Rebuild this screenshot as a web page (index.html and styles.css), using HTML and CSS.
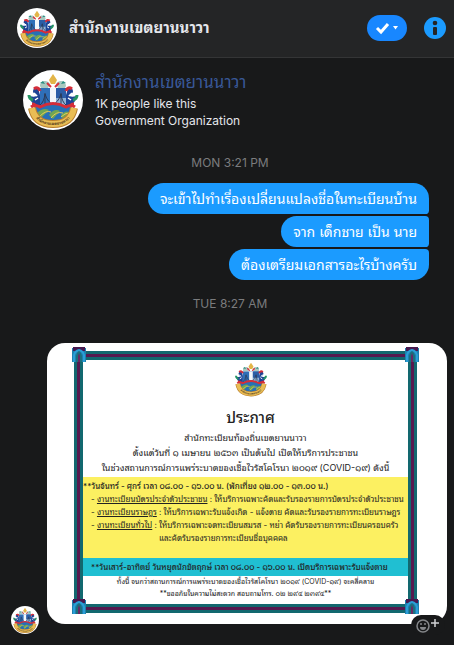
FILE: index.html
```
<!DOCTYPE html>
<html lang="th">
<head>
    <meta charset="UTF-8">
    <meta name="viewport" content="width=device-width, initial-scale=1.0">
    <title>สำนักงานเขตยานนาวา</title>
    <link rel="stylesheet" href="styles.css">
</head>
<body>
    <!-- shared drawings -->
    <svg class="defs" width="0" height="0" aria-hidden="true">
        <symbol id="emblem" viewBox="0 0 60 60">
            <path d="M30 4l4 6-2 4h-4l-2-4z" fill="#e3b548"/>
            <path d="M17 16c0-5 7-7 10-2l-2 4h-7zM43 16c0-5-7-7-10-2l2 4h7z" fill="#a9c8c0"/>
            <path d="M17 13l3-2 2 3zM43 13l-3-2-2 3z" fill="#2c8f83"/>
            <path d="M24 13l4 4M36 13l-4 4" stroke="#d8303c" stroke-width="2"/>
            <path d="M17 18h26v18q-13 9-26 0z" fill="#2f6fb8"/>
            <path d="M27 18h6v22h-6z" fill="#f2f6fa"/>
            <path d="M33 18h10v10H33z" fill="#2b5da6"/>
            <path d="M33 28h10v9H33z" fill="#8fb4d8"/>
            <path d="M22 23v15M38 23v15M22 24q-1 8-5 11M22 24q3 9 8 10 5-1 8-10 1 8 5 11" fill="none" stroke="#2c3b57" stroke-width="1"/>
            <path d="M15 18q-5-1-5 4 2 4 5 3-3 3-8 1 0 6 4 8 3 2 2 5l4-3V25z" fill="#1d4496"/>
            <path d="M45 18q5-1 5 4-2 4-5 3 3 3 8 1 0 6-4 8-3 2-2 5l-4-3V25z" fill="#1d4496"/>
            <path d="M11 19q4-3 6 2M49 19q-4-3-6 2" fill="none" stroke="#d42e3a" stroke-width="3"/>
            <path d="M6 25q0 4 4 5M54 25q0 4-4 5" fill="none" stroke="#249463" stroke-width="3"/>
            <path d="M11 23l3 3M49 23l-3 3M12 30l3-2M48 30l-3-2" stroke="#fff" stroke-width="1.500"/>
            <path d="M9 34q4 0 4 4M51 34q-4 0-4 4" fill="none" stroke="#d42e3a" stroke-width="3"/>
            <path d="M11 38q19-8 38 0l-4 11q-15 6-30 0z" fill="#2670b6"/>
            <path d="M14 43q6-6 12-3l-8 8zM26 45q5-7 11-4l-7 8zM38 45q5-6 9-2l-7 6z" fill="#6fa653"/>
            <path d="M17 46q6-6 11-4M28 48q5-7 12-5M38 47q4-4 8-4" fill="none" stroke="#e7cb58" stroke-width="1"/>
            <path d="M8 37q4-3 9 0 13-7 26 0 5-3 9 0" fill="none" stroke="#d52d38" stroke-width="3"/>
            <path d="M9 38Q12 54 30 54T51 38" fill="none" stroke="#b97f2e" stroke-width="8"/>
            <path d="M9 38Q12 54 30 54T51 38" fill="none" stroke="#e9bd55" stroke-width="6"/>
            <path id="ribbon" d="M9 40Q13 55 30 55T51 40" fill="none"/>
            <text class="ribbon-text"><textPath href="#ribbon" startOffset="50%">สำนักงานเขตยานนาวา</textPath></text>
        </symbol>
        <symbol id="corner" viewBox="0 0 14 15">
            <path d="M0 1h14v14H0z" fill="#1f7fae"/>
            <path d="M1 0h12v4H1z" fill="#47184e"/>
            <path d="M2 15V8q1-4 5-5 4 1 5 5v7" fill="none" stroke="#2a9fd6" stroke-width="2"/>
            <path d="M4 15V9q1-4 3-5 2 1 3 5v6z" fill="#1b6f7c"/>
            <path d="M6 15V9l1-3 1 3v6z" fill="#6a2763"/>
        </symbol>
    </svg>

    <header class="topbar">
        <svg class="avatar avatar-header" role="img" aria-label="สำนักงานเขตยานนาวา"><use href="#emblem"/></svg>
        <h1 class="topbar-title">สำนักงานเขตยานนาวา</h1>
        <button class="done-btn" type="button" aria-label="Mark as done">
            <svg width="24" height="14" viewBox="0 0 24 14">
                <path d="M2 7l4 4 7-8" fill="none" stroke="#fff" stroke-width="3"/>
                <path d="M18 5h5l-2.500 3.500z" fill="#fff"/>
            </svg>
        </button>
        <button class="info-btn" type="button" aria-label="Conversation information">
            <svg width="22" height="22" viewBox="0 0 22 22">
                <circle cx="11" cy="11" r="11" fill="#1b9bff"/>
                <circle cx="11" cy="6" r="2.300" fill="#242526"/>
                <rect x="9" y="10" width="4" height="8" rx="1" fill="#242526"/>
            </svg>
        </button>
    </header>

    <main class="chat">
        <section class="profile">
            <svg class="avatar avatar-profile" aria-hidden="true"><use href="#emblem"/></svg>
            <div class="profile-info">
                <a class="profile-name" href="#">สำนักงานเขตยานนาวา</a>
                <p>1K people like this</p>
                <p>Government Organization</p>
            </div>
        </section>

        <time class="stamp">MON 3:21 PM</time>

        <div class="bubbles">
            <p class="bubble">จะเข้าไปทำเรื่องเปลี่ยนแปลงชื่อในทะเบียนบ้าน</p>
            <p class="bubble">จาก เด็กชาย เป็น นาย</p>
            <p class="bubble">ต้องเตรียมเอกสารอะไรบ้างครับ</p>
        </div>

        <time class="stamp">TUE 8:27 AM</time>

        <div class="reply">
            <svg class="avatar avatar-small" aria-hidden="true"><use href="#emblem"/></svg>
            <article class="notice">
                <div class="notice-frame">
                    <svg class="corner corner-tl"><use href="#corner"/></svg>
                    <svg class="corner corner-tr"><use href="#corner"/></svg>
                    <svg class="corner corner-bl"><use href="#corner"/></svg>
                    <svg class="corner corner-br"><use href="#corner"/></svg>
                    <div class="notice-head">
                        <svg class="notice-emblem" viewBox="3 3 54 56"><use href="#emblem" width="60" height="60"/></svg>
                        <h2>ประกาศ</h2>
                        <p>สำนักทะเบียนท้องถิ่นเขตยานนาวา</p>
                        <p>ตั้งแต่วันที่ ๑ เมษายน ๒๕๖๓ เป็นต้นไป เปิดให้บริการประชาชน</p>
                        <p>ในช่วงสถานการณ์การแพร่ระบาดของเชื้อไวรัสโคโรนา ๒๐๑๙ (COVID-๑๙) ดังนี้</p>
                    </div>
                    <div class="weekday">
                        <p>**วันจันทร์ - ศุกร์ เวลา ๐๘.๐๐ - ๑๖.๐๐ น. (พักเที่ยง ๑๒.๐๐ - ๑๓.๐๐ น.)</p>
                        <ul>
                            <li>- <u>งานทะเบียนบัตรประจำตัวประชาชน</u> : ให้บริการเฉพาะคัดและรับรองรายการบัตรประจำตัวประชาชน</li>
                            <li>- <u>งานทะเบียนราษฎร</u> : ให้บริการเฉพาะรับแจ้งเกิด - แจ้งตาย คัดและรับรองรายการทะเบียนราษฎร</li>
                            <li>- <u>งานทะเบียนทั่วไป</u> : ให้บริการเฉพาะจดทะเบียนสมรส - หย่า คัดรับรองรายการทะเบียนครอบครัว</li>
                            <li class="continued">และคัดรับรองรายการทะเบียนชื่อบุคคคล</li>
                        </ul>
                    </div>
                    <p class="weekend">**วันเสาร์-อาทิตย์ วันหยุดนักขัตฤกษ์ เวลา ๐๘.๐๐ - ๑๖.๐๐ น. เปิดบริการเฉพาะรับแจ้งตาย</p>
                    <div class="notice-foot">
                        <p>ทั้งนี้ จนกว่าสถานการณ์การแพร่ระบาดของเชื้อไวรัสโคโรนา ๒๐๑๙ (COVID-๑๙) จะคลี่คลาย</p>
                        <p>**ขออภัยในความไม่สะดวก สอบถามโทร. ๐๒ ๒๙๔ ๒๓๙๔**</p>
                    </div>
                </div>
                <button class="react-btn" type="button" aria-label="Add reaction">
                    <svg width="26" height="16" viewBox="0 0 26 16" fill="none">
                        <circle cx="8" cy="9" r="6" stroke="#85878a" stroke-width="1.500"/>
                        <path d="M5 10h6q0 3-3 3t-3-3z" fill="#85878a"/>
                        <path d="M6 6v2M10 6v2" stroke="#85878a" stroke-width="1.500"/>
                        <path d="M20 2v8M16 6h8" stroke="#d0d2d5" stroke-width="1.500"/>
                    </svg>
                </button>
            </article>
        </div>
    </main>
</body>
</html>
```
FILE: styles.css
```
* {
    box-sizing: border-box;
}
body {
    margin: 0;
    min-height: 100vh;
    background: #18191a;
    color: #e4e6eb;
    font-family: Inter, "Noto Sans Thai Looped", "Loma", "Noto Sans Thai", "Noto Sans", sans-serif;
    font-size: 12px;
}
h1, h2, p, ul {
    margin: 0;
    padding: 0;
}
button {
    border: none;
    padding: 0;
    cursor: pointer;
    display: flex;
    align-items: center;
    justify-content: center;
}
.defs {
    position: absolute;
}
.ribbon-text {
    font-size: 4px;
    font-weight: bold;
    fill: #4c3518;
    text-anchor: middle;
}
.avatar {
    background: #fff;
    border-radius: 50%;
    flex-shrink: 0;
}
.avatar-header {
    width: 40px;
    height: 40px;
}
.avatar-profile {
    width: 60px;
    height: 60px;
}
.avatar-small {
    width: 28px;
    height: 28px;
}

/* Top bar */
.topbar {
    display: flex;
    align-items: center;
    height: 58px;
    padding: 0 8px 2px 17px;
    background: #242526;
    border-bottom: 1px solid #343536;
}
.topbar-title {
    flex: 1;
    margin-left: 12px;
    font-size: 15px;
    line-height: 24px;
    white-space: nowrap;
}
.done-btn {
    width: 40px;
    height: 26px;
    border-radius: 13px;
    background: #1887ff;
    margin-right: 17px;
}
.info-btn {
    background: none;
}

/* Conversation */
.chat {
    display: flex;
    flex-direction: column;
}
.profile {
    display: flex;
    gap: 12px;
    padding: 12px 23px 0;
}
.profile-info {
    line-height: 17px;
}
.profile-name {
    display: block;
    color: #385898;
    font-size: 17px;
    line-height: 25px;
    text-decoration: none;
}
.stamp {
    padding-left: 6px;
    text-align: center;
    color: #7b7c7e;
    line-height: 16px;
    margin-top: 25px;
}
.bubbles {
    display: flex;
    flex-direction: column;
    align-items: flex-end;
    gap: 2px;
    padding: 12px 25px 0 40px;
    margin-bottom: -9px;
}
.bubble {
    background: #1b9bff;
    color: #fff;
    font-size: 14px;
    line-height: 19px;
    padding: 6px 12px;
    border-radius: 16px 4px 4px 16px;
}
.bubble:first-child {
    border-top-right-radius: 16px;
}
.bubble:last-child {
    border-bottom-right-radius: 16px;
}

/* Picture message */
.reply {
    display: flex;
    align-items: flex-end;
    gap: 8px;
    padding: 31px 7px 11px 11px;
}
.notice {
    position: relative;
    flex: 1;
    min-width: 0;
    margin-bottom: 10px;
    padding: 8px 30px 11px 27px;
    background: #fff;
    border-radius: 18px;
    color: #222;
    font-size: 8px;
    white-space: nowrap;
}
.notice-frame {
    position: relative;
    border: 3px solid #12686f;
    box-shadow: inset 0 0 0 3px #56194f, inset 0 0 0 6px #12686f;
    padding: 6px;
}
.corner {
    position: absolute;
    width: 14px;
    height: 15px;
}
.corner-tl {
    top: -7px;
    left: -5px;
}
.corner-tr {
    top: -7px;
    right: -5px;
}
.corner-bl {
    bottom: -4px;
    left: -5px;
}
.corner-br {
    bottom: -4px;
    right: -5px;
}
.notice-head {
    display: flex;
    flex-direction: column;
    align-items: center;
    padding: 2px 0;
    font-size: 9px;
    line-height: 15px;
}
.notice-emblem {
    width: 34px;
    height: 35px;
    margin-left: 10px;
}
.notice-head h2 {
    margin-left: 10px;
    padding-top: 9px;
    font-size: 15px;
    font-weight: 500;
    line-height: 24px;
}
.weekday {
    background: #fcf061;
    padding: 3px 0 13px;
    line-height: 13px;
}
.weekday p {
    font-weight: 500;
}
.weekday ul {
    list-style: none;
    padding-left: 8px;
}
.continued {
    padding-left: 68px;
}
.weekend {
    background: #20bfd2;
    padding-left: 8px;
    font-weight: 500;
    line-height: 18px;
}
.notice-foot {
    text-align: center;
    padding-bottom: 4px;
    font-size: 7px;
    line-height: 12px;
}
.react-btn {
    position: absolute;
    right: 2px;
    bottom: -11px;
    width: 34px;
    height: 20px;
    border-radius: 10px;
    background: #18191a;
}
```
